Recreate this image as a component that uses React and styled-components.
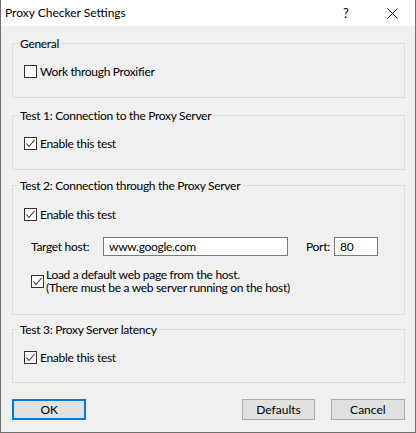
import React from 'react';
import styled, { createGlobalStyle } from 'styled-components';

const GlobalStyle = createGlobalStyle`
  html, body {
    margin: 0;
    padding: 0;
    background: #ffffff;
  }
  body {
    font-family: Lato, "Noto Sans", sans-serif;
    font-size: 12px;
    color: #000;
  }
  * {
    box-sizing: border-box;
  }
`;

const Window = styled.div`
  width: 416px;
  height: 433px;
  display: flex;
  flex-direction: column;
  background: #f0f0f0;
  border: 1px solid #6f6f6f;
  border-top: none;
`;

const TitleBar = styled.div`
  height: 26px;
  background: #ffffff;
  display: flex;
  align-items: center;
  padding-left: 4px;
`;

const Title = styled.div`
  flex: 1;
  font-size: 12px;
  line-height: 16px;
`;

const CaptionButton = styled.div`
  width: 46px;
  height: 26px;
  display: flex;
  align-items: center;
  justify-content: center;
  font-size: 13px;
`;

const Content = styled.div`
  display: flex;
  flex-direction: column;
  padding: 0 10px 0 11px;
  letter-spacing: -0.3px;
`;

const Group = styled.section`
  position: relative;
  border: 1px solid #dcdcdc;
  height: ${p => p.$h}px;
  margin-top: ${p => p.$top}px;
  padding: ${p => p.$pt || 20}px 0 0 11px;
`;

const Caption = styled.span`
  position: absolute;
  top: -7px;
  left: 6px;
  padding: 0 2px 0 1px;
  line-height: 13px;
  background: #f0f0f0;
  white-space: nowrap;
`;

const CheckRow = styled.label`
  display: flex;
  align-items: center;
  gap: 3px;
  height: 15px;
  line-height: 15px;
  padding-left: ${p => p.$indent || 0}px;
`;

const Box = styled.span`
  width: 13px;
  height: 13px;
  flex: none;
  border: 1px solid #333333;
  background: #ffffff;
  display: flex;
  align-items: center;
  justify-content: center;
`;

const FieldRow = styled.div`
  display: flex;
  align-items: center;
  height: 19px;
  margin-top: 15px;
  padding-left: 7px;
`;

const FieldLabel = styled.span`
  width: ${p => p.$w}px;
  margin-left: ${p => p.$ml || 0}px;
  flex: none;
`;

const TextBox = styled.div`
  width: ${p => p.$w}px;
  height: 19px;
  flex: none;
  border: 1px solid #7a7a7a;
  background: #ffffff;
  padding-left: 5px;
  line-height: 17px;
`;

const LoadRow = styled(CheckRow)`
  height: auto;
  line-height: 13px;
  margin-top: 12px;
  gap: 2px;
`;

const Footer = styled.div`
  display: flex;
  margin-top: 16px;
  letter-spacing: 0;
`;

const Button = styled.div`
  width: ${p => p.$w || 75}px;
  height: 21px;
  margin-left: ${p => p.$ml || 0}px;
  background: #e1e1e1;
  border: ${p => (p.$primary ? '2px solid #0078d7' : '1px solid #adadad')};
  display: flex;
  align-items: center;
  justify-content: center;
`;

const Check = ({ checked }) => (
  <Box>
    {checked && (
      <svg width="11" height="11" viewBox="0 0 11 11">
        <polyline points="1.5,5.5 4,8.5 9.5,2" fill="none" stroke="#333" strokeWidth="1.1" />
      </svg>
    )}
  </Box>
);

const CheckOption = ({ checked, children }) => (
  <CheckRow>
    <Check checked={checked} />
    <span>{children}</span>
  </CheckRow>
);

export default function App() {
  return (
    <>
      <GlobalStyle />
      <Window>
        <TitleBar>
          <Title>Proxy Checker Settings</Title>
          <CaptionButton>?</CaptionButton>
          <CaptionButton>
            <svg width="11" height="11" viewBox="0 0 11 11">
              <path d="M0.5 0.5 L10.5 10.5 M10.5 0.5 L0.5 10.5" stroke="#000" strokeWidth="1" />
            </svg>
          </CaptionButton>
        </TitleBar>
        <Content>
          <Group $h={55} $top={17}>
            <Caption>General</Caption>
            <CheckOption>Work through Proxifier</CheckOption>
          </Group>

          <Group $h={55} $top={17}>
            <Caption>Test 1: Connection to the Proxy Server</Caption>
            <CheckOption checked>Enable this test</CheckOption>
          </Group>

          <Group $h={130} $top={15} $pt={21}>
            <Caption>Test 2: Connection through the Proxy Server</Caption>
            <CheckOption checked>Enable this test</CheckOption>
            <FieldRow>
              <FieldLabel $w={72}>Target host:</FieldLabel>
              <TextBox $w={185}>www.google.com</TextBox>
              <FieldLabel $w={28} $ml={18}>Port:</FieldLabel>
              <TextBox $w={44}>80</TextBox>
            </FieldRow>
            <LoadRow $indent={7}>
              <Check checked />
              <span>
                Load a default web page from the host.
                <br />
                (There must be a web server running on the host)
              </span>
            </LoadRow>
          </Group>

          <Group $h={54} $top={14}>
            <Caption>Test 3: Proxy Server latency</Caption>
            <CheckOption checked>Enable this test</CheckOption>
          </Group>

          <Footer>
            <Button $primary>OK</Button>
            <Button $w={73} $ml={156}>Defaults</Button>
            <Button $ml={16}>Cancel</Button>
          </Footer>
        </Content>
      </Window>
    </>
  );
}
